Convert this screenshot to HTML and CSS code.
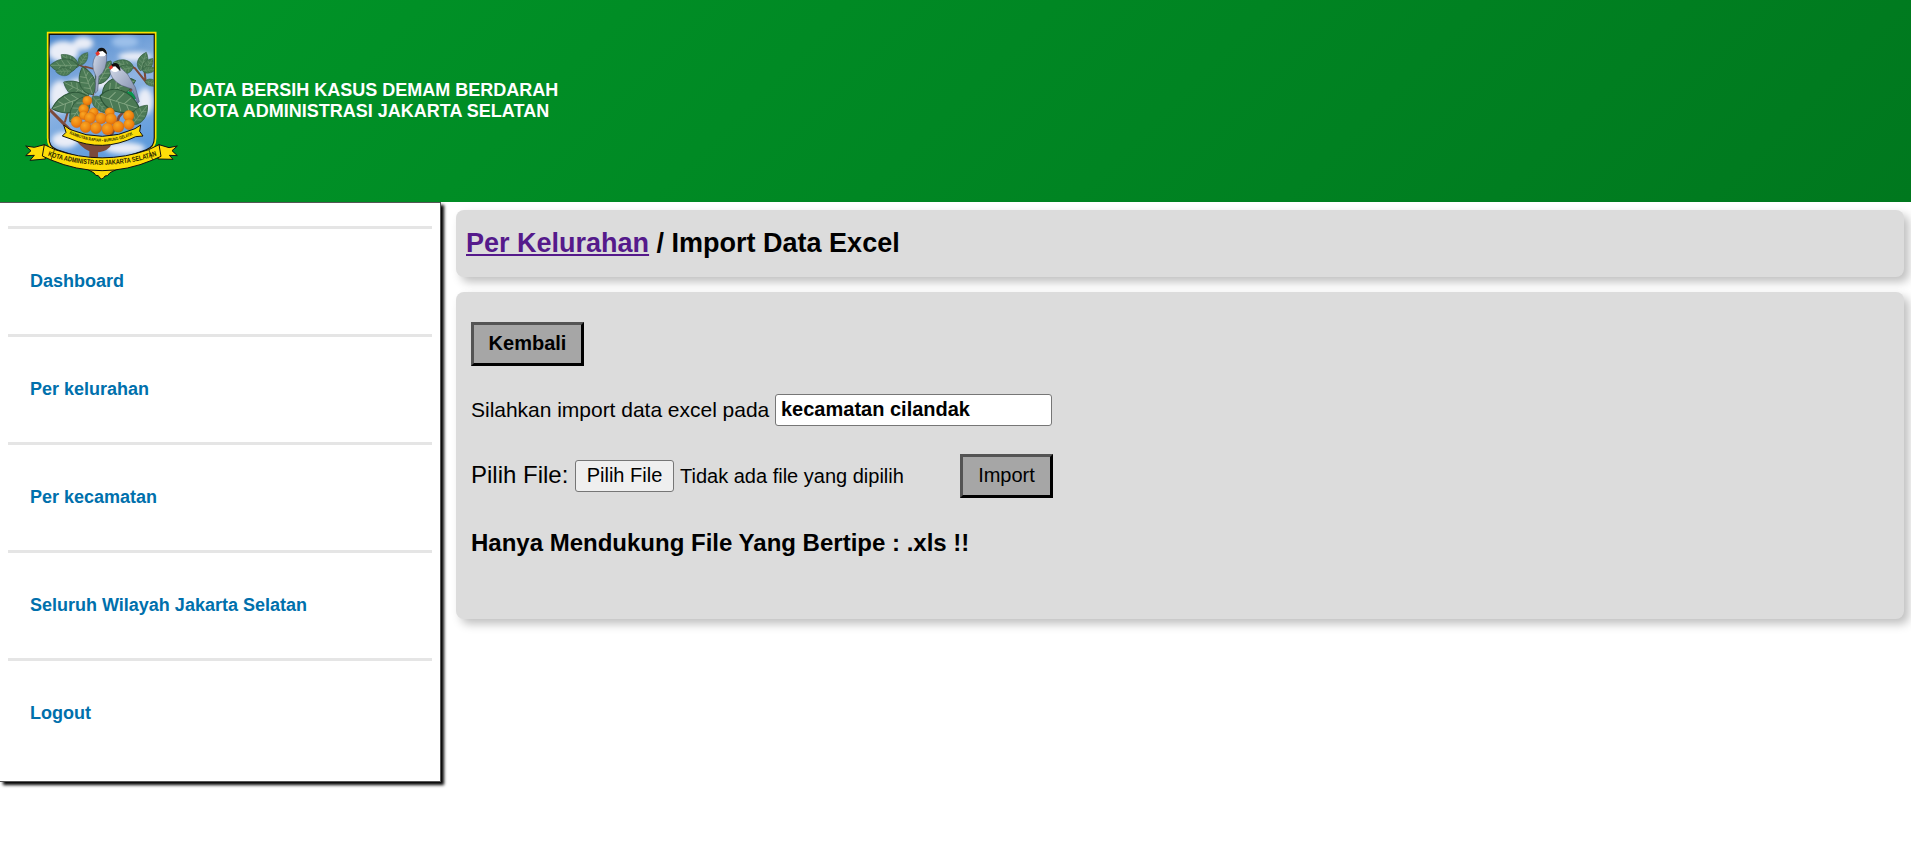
FILE: index.html
```html
<!DOCTYPE html>
<html lang="id">
<head>
<meta charset="utf-8">
<title>Import Data Excel</title>
<link rel="stylesheet" href="styles.css">
</head>
<body>
<header class="header">
  <svg class="logo" viewBox="0 0 525 510" role="img" aria-label="Logo Jakarta Selatan">
    <defs>
      <linearGradient id="sky" x1="0" y1="0" x2="0.3" y2="1">
        <stop offset="0" stop-color="#4a86cc"/><stop offset="0.5" stop-color="#8fb4e2"/><stop offset="1" stop-color="#5e9bdc"/>
      </linearGradient>
      <radialGradient id="fruit" cx="0.4" cy="0.35" r="0.7">
        <stop offset="0" stop-color="#f9a826"/><stop offset="0.6" stop-color="#ee8610"/><stop offset="1" stop-color="#dc640a"/>
      </radialGradient>
      <linearGradient id="bird" x1="0" y1="0" x2="1" y2="1">
        <stop offset="0" stop-color="#d4dbea"/><stop offset="1" stop-color="#6b7a9c"/>
      </linearGradient>
      <filter id="soft" x="-30%" y="-30%" width="160%" height="160%"><feGaussianBlur stdDeviation="8"/></filter>
      <clipPath id="shield"><path d="M103 43H417V352Q417 380 393 388L262 432L127 388Q103 380 103 352Z"/></clipPath>
      <g id="leaf">
        <path d="M0 0C12-26 48-30 74 0C48 24 14 22 0 0Z" fill="#4b7a55" stroke="#2c5638" stroke-width="2"/>
        <path d="M2 0H72M16 0L24-15M30 0L39-18M45 0L53-14M18 0L28 13M34 0L43 14M49 0L57 9" fill="none" stroke="#86a985" stroke-width="1.6"/>
      </g>
      <path id="arcTop" d="M163 341Q262 389 360 341"/>
      <path id="arcBottom" d="M98 407Q262 462 423 407"/>
    </defs>
    <path d="M98 38H422V354Q422 384 396 393L262 440L124 393Q98 384 98 354Z" fill="#111" stroke="#fbe000" stroke-width="5"/>
    <g clip-path="url(#shield)">
      <rect x="104" y="45" width="312" height="400" fill="url(#sky)"/>
      <g fill="#e9edf7" filter="url(#soft)">
        <ellipse cx="145" cy="95" rx="46" ry="32"/><ellipse cx="205" cy="70" rx="30" ry="20"/>
        <ellipse cx="330" cy="65" rx="40" ry="18" fill="#9cc0ea"/><ellipse cx="360" cy="110" rx="50" ry="14"/>
        <ellipse cx="135" cy="230" rx="30" ry="48"/><ellipse cx="390" cy="245" rx="24" ry="40"/>
        <ellipse cx="150" cy="360" rx="40" ry="24"/><ellipse cx="330" cy="385" rx="60" ry="18"/><ellipse cx="240" cy="190" rx="80" ry="18"/>
      </g>
      <g fill="none" stroke="#7c4a3a" stroke-linecap="round">
        <path d="M236 405V385Q200 365 160 325L105 270" stroke-width="9"/>
        <path d="M192 355Q215 383 238 386Q262 388 276 374" stroke-width="22"/>
        <path d="M236 380V430" stroke-width="26"/>
        <path d="M262 380Q300 340 312 290Q345 260 350 180" stroke-width="8"/>
        <path d="M235 225Q240 170 205 140L175 128M210 140L250 150" stroke-width="5"/>
        <path d="M320 125L360 145L392 185L388 145M215 225L160 270L150 305" stroke-width="6"/>
      </g>
      <path d="M325 213L350 215L366 235L345 246Z" fill="#08964a"/>
      <use href="#leaf" transform="translate(190 140) rotate(215) scale(.85)"/>
      <use href="#leaf" transform="translate(188 136) rotate(180) scale(1.12)"/>
      <use href="#leaf" transform="translate(170 153) rotate(178) scale(.65)"/>
      <use href="#leaf" transform="translate(193 136) rotate(-57) scale(.62)"/>
      <use href="#leaf" transform="translate(248 192) rotate(-60) scale(1.08)"/>
      <use href="#leaf" transform="translate(355 140) rotate(192) scale(.83)"/>
      <use href="#leaf" transform="translate(354 142) rotate(168) scale(.7)"/>
      <use href="#leaf" transform="translate(376 152) rotate(-72) scale(.78)"/>
      <use href="#leaf" transform="translate(386 155) rotate(-55) scale(.65)"/>
      <use href="#leaf" transform="translate(382 152) rotate(-6) scale(.55)"/>
      <use href="#leaf" transform="translate(390 184) rotate(15) scale(.55)"/>
      <use href="#leaf" transform="translate(222 225) rotate(207) scale(1.15)"/>
      <use href="#leaf" transform="translate(233 224) rotate(-110) scale(1.2)"/>
      <use href="#leaf" transform="translate(215 228) rotate(160) scale(1.5)"/>
      <use href="#leaf" transform="translate(218 230) rotate(125) scale(1.25)"/>
      <use href="#leaf" transform="translate(232 230) rotate(48) scale(.9)"/>
      <use href="#leaf" transform="translate(262 222) rotate(-22) scale(1.45)"/>
      <use href="#leaf" transform="translate(255 228) rotate(18) scale(1.7)"/>
      <use href="#leaf" transform="translate(352 314) rotate(-52) scale(1)"/>
      <g stroke="#46506b" stroke-width="1.5">
        <path d="M249 101Q229 116 235 149L243 170L240 220L248 213L252 169Q277 150 275 105Z" fill="url(#bird)"/>
        <path d="M284 149Q285 177 319 196L351 207L368 250L373 245L361 202L338 163L312 139Z" fill="url(#bird)"/>
      </g>
      <ellipse cx="261" cy="97" rx="14" ry="12" fill="#fff"/><path d="M245 96Q250 80 265 84Q276 89 276 104L263 93Z" fill="#111"/><path d="M250 93L241 99L246 108L255 102Z" fill="#e83528"/>
      <ellipse cx="300" cy="144" rx="14" ry="12" fill="#fff"/><path d="M285 142Q291 126 306 130Q317 137 316 154L301 139Z" fill="#111"/><path d="M290 135L281 142L286 149L294 143Z" fill="#e83528"/>
      <g fill="url(#fruit)" stroke="#d0690c" stroke-width="1">
        <circle cx="217" cy="242" r="14"/><circle cx="206" cy="268" r="15"/><circle cx="236" cy="277" r="14"/><circle cx="284" cy="277" r="14"/>
        <circle cx="341" cy="287" r="16"/><circle cx="185" cy="306" r="17"/><circle cx="206" cy="286" r="13"/><circle cx="225" cy="294" r="17"/><circle cx="258" cy="295" r="17"/>
        <circle cx="288" cy="297" r="17"/><circle cx="212" cy="321" r="17"/><circle cx="243" cy="324" r="17"/><circle cx="278" cy="327" r="18"/>
        <circle cx="310" cy="320" r="17"/><circle cx="342" cy="313" r="16"/>
      </g>
    </g>
    <g fill="#fddd08" stroke="#111" stroke-width="3" stroke-linejoin="round">
      <path d="M146 315L164 328Q262 371 360 326L377 315L374 334L384 348L362 350Q262 399 165 356L142 348L153 337Z"/>
      <path d="M88 374L58 382L32 378L48 392L32 407L58 406L45 421L91 417ZM432 374L462 383L487 378L471 392L487 407L463 406L474 418L429 417Z"/>
      <path d="M212 445L237 459Q241 469 250 467Q260 486 270 468Q279 470 285 458L311 445Z"/>
      <path d="M88 374L120 389Q262 438 401 389L432 374L438 409L413 420Q262 484 108 420L82 408Z"/>
    </g>
    <path d="M108 420L118 390M413 420L402 390" stroke="#111" stroke-width="2"/>
    <text class="ribbon-small"><textPath href="#arcTop" textLength="198" lengthAdjust="spacingAndGlyphs">RAMBUTAN RAPIAH - BURUNG GELATIK</textPath></text>
    <text class="ribbon"><textPath href="#arcBottom" textLength="334" lengthAdjust="spacingAndGlyphs">KOTA ADMINISTRASI JAKARTA SELATAN</textPath></text>
  </svg>
  <div class="title">DATA BERSIH KASUS DEMAM BERDARAH<br>KOTA ADMINISTRASI JAKARTA SELATAN</div>
</header>
<div class="page">
  <nav class="sidebar">
    <a class="item" href="#">Dashboard</a>
    <a class="item" href="#">Per kelurahan</a>
    <a class="item" href="#">Per kecamatan</a>
    <a class="item" href="#">Seluruh Wilayah Jakarta Selatan</a>
    <a class="item" href="#">Logout</a>
  </nav>
  <main class="content">
    <h1 class="card heading"><a class="crumb" href="#">Per Kelurahan</a> / Import Data Excel</h1>
    <section class="card panel">
      <button class="btn back">Kembali</button>
      <div class="row target">
        <label class="target-label" for="kecamatan">Silahkan import data excel pada</label>
        <input class="field" id="kecamatan" value="kecamatan cilandak">
      </div>
      <div class="row upload">
        <span class="file-label">Pilih File:</span>
        <button class="file-btn">Pilih File</button>
        <span class="file-name">Tidak ada file yang dipilih</span>
        <button class="btn import">Import</button>
      </div>
      <h2 class="note">Hanya Mendukung File Yang Bertipe : .xls !!</h2>
    </section>
  </main>
</div>
</body>
</html>
```
FILE: styles.css
```css
* { box-sizing: border-box; }
body { margin: 0; background: #fff; font-family: "Liberation Sans", Arial, sans-serif; color: #000; }
.header { height: 202px; display: flex; align-items: center; padding: 8px 15px 0; background: linear-gradient(135deg, #009628, #00781e); }
.logo { width: 175px; height: 170px; flex: none; }
.ribbon, .ribbon-small { font-weight: bold; fill: #2b2600; }
.ribbon { font-size: 21px; }
.ribbon-small { font-size: 13px; }
.title { color: #fff; font-size: 18px; font-weight: bold; line-height: 21px; margin: -9px 0 0 -0.5px; }
.page { display: flex; align-items: flex-start; min-height: 663px; }
.sidebar { width: 441px; height: 580px; flex: none; border: 1px solid #555; border-left: 0; padding: 23px 8px 0; background: #fff; box-shadow: 3px 3px 3px #000; }
.item { display: block; height: 108px; border-top: 3px solid #e5e5e5; padding: 42px 22px 0; font-size: 18px; line-height: 21px; font-weight: bold; color: #0070ac; text-decoration: none; }
.content { flex: 1; padding: 8px 7px 0 15px; display: flex; flex-direction: column; gap: 15px; }
.card { background: #dcdcdc; border-radius: 8px; box-shadow: 5px 5px 10px rgba(0, 0, 0, .25); }
.heading { margin: 0; height: 67px; padding: 18px 10px; font-size: 27px; line-height: 31px; }
.crumb { color: #551a8b; }
.panel { height: 327px; padding: 30px 15px; display: flex; flex-direction: column; align-items: flex-start; }
.btn { height: 44px; flex: none; border: 3px outset #000; border-radius: 0; padding: 0 0 2px; background: #a6a6a6; color: #000; font: 20px "Liberation Sans", Arial, sans-serif; }
.back { width: 113px; font-weight: bold; }
.row { display: flex; align-items: center; }
.target { height: 32px; margin-top: 28px; }
.target-label { width: 304px; font-size: 21px; letter-spacing: -0.02px; }
.field { width: 277px; height: 32px; border: 1px solid #767676; border-radius: 3px; padding: 0 5px 2px; font: bold 20px "Liberation Sans", Arial, sans-serif; }
.upload { height: 44px; margin-top: 28px; }
.file-label { width: 104px; font-size: 24px; line-height: 28px; padding-bottom: 2px; }
.file-btn { width: 99px; height: 32px; padding: 0 0 2px; border: 1px solid #767676; border-radius: 3px; background: #efefef; color: #000; font: 20px "Liberation Sans", Arial, sans-serif; }
.file-name { width: 286px; padding-left: 6px; font-size: 20px; }
.import { width: 93px; }
.note { margin: 31px 0 0; font-size: 24px; line-height: 28px; }
```
